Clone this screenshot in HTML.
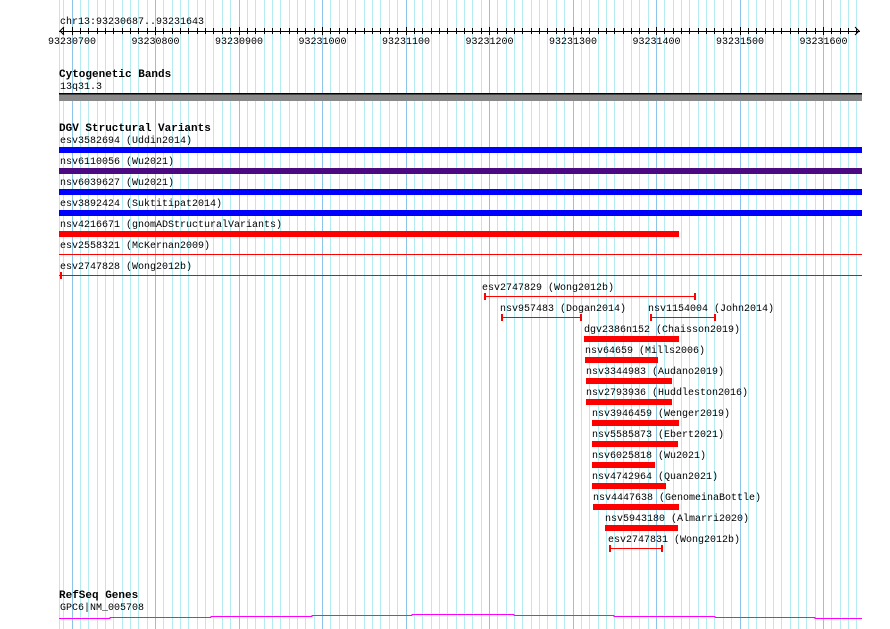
<!DOCTYPE html>
<html><head><meta charset="utf-8">
<style>
html,body{margin:0;padding:0;background:#fff;width:890px;height:629px;overflow:hidden}
svg{display:block}
text{font-family:"Liberation Mono","DejaVu Sans Mono",monospace;font-size:10px;fill:#000}
.b{font-weight:bold;font-size:11px}
</style></head><body>
<svg id="s" width="890" height="629" xmlns="http://www.w3.org/2000/svg">
<g id="grid"></g>
<g id="ruler"></g>
<text x="60" y="24">chr13:93230687..93231643</text>
<text x="59" y="77" class="b">Cytogenetic Bands</text>
<text x="60" y="89">13q31.3</text>
<rect x="59" y="93" width="803" height="8" fill="#888"/>
<rect x="59" y="93" width="803" height="1.5" fill="#000"/>
<text x="59" y="131" class="b">DGV Structural Variants</text>
<text x="60" y="143">esv3582694 (Uddin2014)</text>
<rect x="59" y="147" width="803" height="6" fill="#0000ff"/>
<text x="60" y="164">nsv6110056 (Wu2021)</text>
<rect x="59" y="168" width="803" height="6" fill="#4b0a82"/>
<text x="60" y="185">nsv6039627 (Wu2021)</text>
<rect x="59" y="189" width="803" height="6" fill="#0000ff"/>
<text x="60" y="206">esv3892424 (Suktitipat2014)</text>
<rect x="59" y="210" width="803" height="6" fill="#0000ff"/>
<text x="60" y="227">nsv4216671 (gnomADStructuralVariants)</text>
<rect x="59" y="231" width="620" height="6" fill="#ff0000"/>
<text x="60" y="248">esv2558321 (McKernan2009)</text>
<rect x="59" y="254" width="803" height="1" fill="#ff0000"/>
<text x="60" y="269">esv2747828 (Wong2012b)</text>
<rect x="59" y="275" width="803" height="1" fill="#ff0000"/>
<rect x="60" y="272" width="2" height="7" fill="#ff0000"/>
<g id="feat"></g>
<text x="59" y="598" class="b">RefSeq Genes</text>
<text x="60" y="610">GPC6|NM_005708</text>
<polyline fill="none" stroke="#ff00ff" stroke-width="1" points="59,618.5 110,618.5 110,617.5 211,617.5 211,616.5 312,616.5 312,615.5 412,615.5 412,614.5 514,614.5 514,615.5 614,615.5 614,616.5 715,616.5 715,617.5 815,617.5 815,618.5 862,618.5"/>
</svg>
<script>
var NS="http://www.w3.org/2000/svg";
function el(p,t,a,tx){var e=document.createElementNS(NS,t);for(var k in a)e.setAttribute(k,a[k]);if(tx)e.textContent=tx;document.getElementById(p).appendChild(e);return e;}
var x0=71.5,step=8.35;
for(var i=-1;i<=95;i++){var x=x0+i*step;if(x>858)break;
 var major=(i%10==0);
 el("grid","rect",{x:Math.round(x),y:0,width:1,height:629,fill:major?"#8cc4ea":"#b4ecf2"});
 el("ruler","rect",{x:Math.round(x),y:major?27:28,width:1,height:major?8:6,fill:"#000"});
 if(major&&i>=0)el("ruler","text",{x:x+0.5,y:44,"text-anchor":"middle"},String(93230700+i*10));
}
el("grid","rect",{x:59,y:0,width:1,height:629,fill:"#b4ecf2"});
el("ruler","rect",{x:59,y:31,width:801,height:1,fill:"#000"});
el("ruler","polyline",{points:"64,27 60,31 64,35",fill:"none",stroke:"#000"});
el("ruler","polyline",{points:"855,27 859,31 855,35",fill:"none",stroke:"#000"});
var F=[
["esv2747829 (Wong2012b)",482,296,484,695,1],
["nsv957483 (Dogan2014)",500,317,501,581,1],
["nsv1154004 (John2014)",648,317,650,715,1],
["dgv2386n152 (Chaisson2019)",584,336,584,679,0],
["nsv64659 (Mills2006)",585,357,585,658,0],
["nsv3344983 (Audano2019)",586,378,586,672,0],
["nsv2793936 (Huddleston2016)",586,399,586,672,0],
["nsv3946459 (Wenger2019)",592,420,592,679,0],
["nsv5585873 (Ebert2021)",592,441,592,678,0],
["nsv6025818 (Wu2021)",592,462,592,655,0],
["nsv4742964 (Quan2021)",592,483,592,666,0],
["nsv4447638 (GenomeinaBottle)",593,504,593,679,0],
["nsv5943180 (Almarri2020)",605,525,605,678,0],
["esv2747831 (Wong2012b)",608,548,609,662,1]];
F.forEach(function(f){
 if(f[5]){el("feat","text",{x:f[1],y:f[2]-6},f[0]);
  el("feat","rect",{x:f[3],y:f[2],width:f[4]-f[3],height:1,fill:"#f00"});
  el("feat","rect",{x:f[3],y:f[2]-3,width:2,height:7,fill:"#f00"});
  el("feat","rect",{x:f[4]-1,y:f[2]-3,width:2,height:7,fill:"#f00"});
 }else{el("feat","text",{x:f[1],y:f[2]-4},f[0]);
  el("feat","rect",{x:f[3],y:f[2],width:f[4]-f[3],height:6,fill:"#f00"});}
});
</script>
</body></html>
